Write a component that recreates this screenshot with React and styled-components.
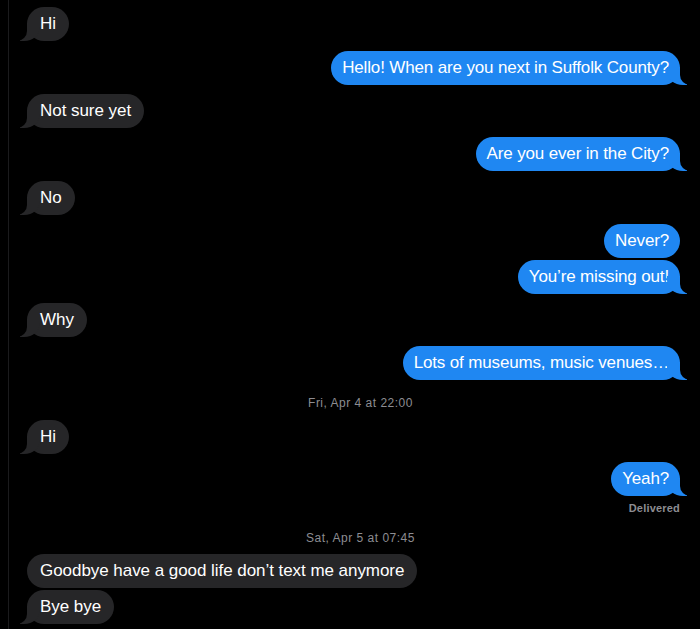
import styled, { createGlobalStyle } from "styled-components";

const GlobalStyle = createGlobalStyle`
  html, body {
    margin: 0;
    padding: 0;
    background: #000;
  }
  body {
    font-family: "Liberation Sans", Arial, sans-serif;
    -webkit-font-smoothing: antialiased;
  }
`;

const Screen = styled.div`
  width: 700px;
  height: 629px;
  overflow: hidden;
  background: #000;
  display: flex;
`;

const Edge = styled.div`
  width: 8px;
  border-right: 1px solid #1b1b1d;
  flex-shrink: 0;
`;

const Thread = styled.div`
  flex: 1;
  display: flex;
  flex-direction: column;
  padding: 7px 20px 0 18px;
`;

const Row = styled.div`
  display: flex;
  justify-content: ${(p) => (p.$me ? "flex-end" : "flex-start")};
  margin-top: ${(p) => p.$gap}px;
`;

const Bubble = styled.div`
  position: relative;
  height: 34px;
  box-sizing: border-box;
  padding: ${(p) => (p.$me ? "0 11px 0 11px" : "0 13px")};
  display: flex;
  align-items: center;
  border-radius: 17px;
  font-size: 17px;
  letter-spacing: ${(p) => (p.$me ? "-0.15px" : "-0.05px")};
  color: #fff;
  background: ${(p) => (p.$me ? "#1f87f2" : "#262628")};
  white-space: nowrap;

  ${(p) =>
    p.$tail &&
    `
    &::before {
      content: "";
      position: absolute;
      bottom: 0;
      ${p.$me ? "right: -7px;" : "left: -7px;"}
      width: 20px;
      height: 18px;
      background: ${p.$me ? "#1f87f2" : "#262628"};
      ${p.$me ? "border-bottom-left-radius: 16px 14px;" : "border-bottom-right-radius: 16px 14px;"}
    }
    &::after {
      content: "";
      position: absolute;
      bottom: 0;
      ${p.$me ? "right: -10px;" : "left: -10px;"}
      width: 10px;
      height: 20px;
      background: #000;
      ${p.$me ? "border-bottom-left-radius: 10px;" : "border-bottom-right-radius: 10px;"}
    }
  `}
`;

const Stamp = styled.div`
  text-align: center;
  font-size: 12px;
  letter-spacing: 0.5px;
  line-height: 14px;
  color: #8d8d92;
  margin-top: ${(p) => p.$gap}px;
  margin-left: 14px;
`;

const Status = styled.div`
  text-align: right;
  font-size: 11px;
  line-height: 14px;
  font-weight: bold;
  letter-spacing: 0.2px;
  color: #8d8d92;
  margin-top: ${(p) => p.$gap}px;
`;

const items = [
  { type: "msg", text: "Hi", gap: 0, tail: true },
  { type: "msg", me: true, text: "Hello! When are you next in Suffolk County?", gap: 10, tail: true },
  { type: "msg", text: "Not sure yet", gap: 9, tail: true },
  { type: "msg", me: true, text: "Are you ever in the City?", gap: 9, tail: true },
  { type: "msg", text: "No", gap: 10, tail: true },
  { type: "msg", me: true, text: "Never?", gap: 9 },
  { type: "msg", me: true, text: "You\u2019re missing out!", gap: 2, tail: true },
  { type: "msg", text: "Why", gap: 9, tail: true },
  { type: "msg", me: true, text: "Lots of museums, music venues\u2026", gap: 9, tail: true },
  { type: "stamp", text: "Fri, Apr 4 at 22:00", gap: 16 },
  { type: "msg", text: "Hi", gap: 10, tail: true },
  { type: "msg", me: true, text: "Yeah?", gap: 8, tail: true },
  { type: "status", text: "Delivered", gap: 5 },
  { type: "stamp", text: "Sat, Apr 5 at 07:45", gap: 16 },
  { type: "msg", text: "Goodbye have a good life don\u2019t text me anymore", gap: 9 },
  { type: "msg", text: "Bye bye", gap: 2, tail: true },
];

const App = () => {
  return (
    <>
      <GlobalStyle />
      <Screen>
        <Edge />
        <Thread>
          {items.map((item, i) => {
            if (item.type === "stamp") {
              return (
                <Stamp key={i} $gap={item.gap}>
                  {item.text}
                </Stamp>
              );
            }
            if (item.type === "status") {
              return (
                <Status key={i} $gap={item.gap}>
                  {item.text}
                </Status>
              );
            }
            return (
              <Row key={i} $me={item.me} $gap={item.gap}>
                <Bubble $me={item.me} $tail={item.tail}>
                  {item.text}
                </Bubble>
              </Row>
            );
          })}
        </Thread>
      </Screen>
    </>
  );
};

export default App;
